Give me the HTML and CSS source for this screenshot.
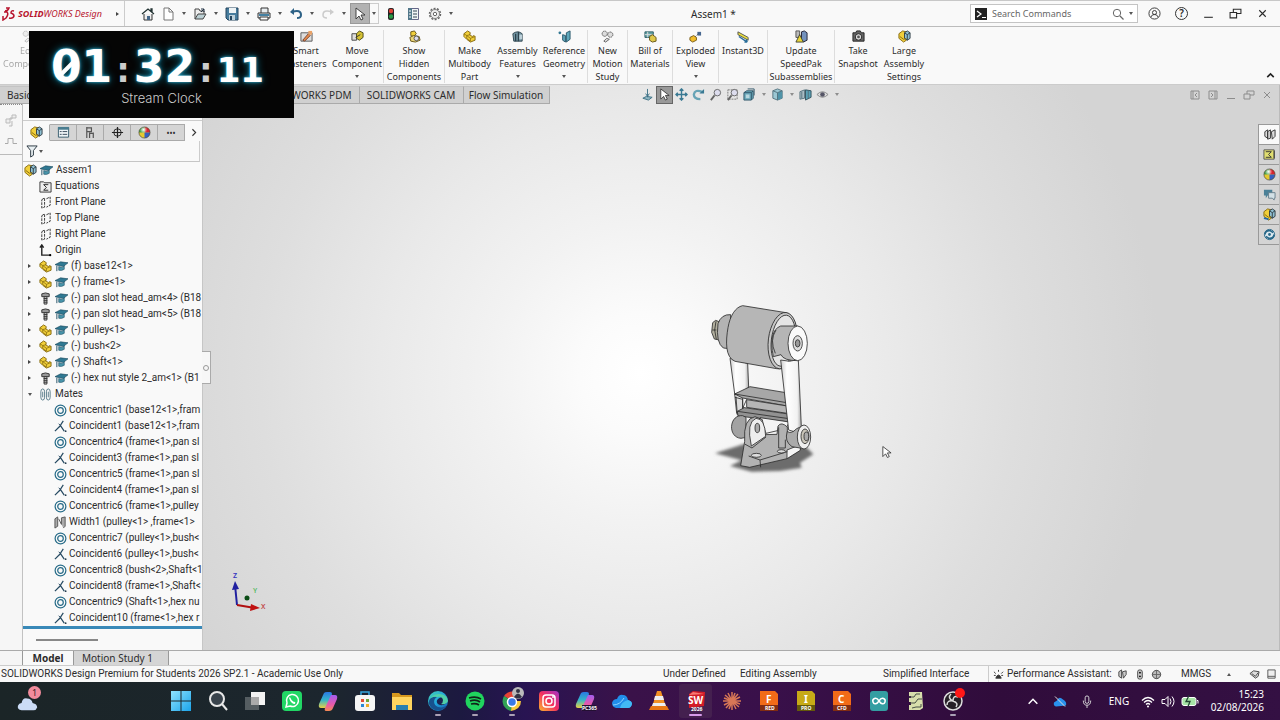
FILE: index.html
```html
<!DOCTYPE html>
<html lang="en">
<head>
<meta charset="utf-8">
<title>Assem1 - SOLIDWORKS Design</title>
<link rel="stylesheet" href="styles.css">
</head>
<body>
<svg class="defs" aria-hidden="true">
  <defs>
    <radialGradient id="ball"><stop offset="0" stop-color="#fff"/><stop offset="1" stop-color="#fff" stop-opacity="0"/></radialGradient>
    <linearGradient id="leg"><stop offset="0" stop-color="#ccc"/><stop offset=".3" stop-color="#fff"/><stop offset=".8" stop-color="#f2f2f2"/><stop offset="1" stop-color="#aaa"/></linearGradient>
    <linearGradient id="insta" x1="0" y1="1" x2="1" y2="0"><stop offset="0" stop-color="#fdb62c"/><stop offset=".5" stop-color="#f2305f"/><stop offset="1" stop-color="#a432c8"/></linearGradient>
    <linearGradient id="edge" x1="0" y1="0" x2="1" y2="1"><stop offset="0" stop-color="#45d3b0"/><stop offset=".5" stop-color="#22a6de"/><stop offset="1" stop-color="#1354a8"/></linearGradient>
    <linearGradient id="win" x1="0" y1="0" x2="1" y2="1"><stop offset="0" stop-color="#8fe3ff"/><stop offset="1" stop-color="#1ba4ea"/></linearGradient>
    <linearGradient id="cop-a" x1="0" y1="0" x2="0" y2="1"><stop offset="0" stop-color="#2a78e4"/><stop offset=".5" stop-color="#35b5c9"/><stop offset="1" stop-color="#e8cf45"/></linearGradient>
    <linearGradient id="cop-b" x1="0" y1="0" x2="0" y2="1"><stop offset="0" stop-color="#a35df0"/><stop offset=".6" stop-color="#e85aa8"/><stop offset="1" stop-color="#f58a52"/></linearGradient>
    <filter id="blur"><feGaussianBlur stdDeviation="5"/></filter>
    <symbol id="part" viewBox="0 0 14 14"><path d="M1 4 5 1l3 2-1 2 3 2 2-1 1 1v4l-5 2-4-3-3-3z" fill="#f1cf3a" stroke="#86690e"/><path d="M1 4l3 2 4-1M4 6v3l4 3V9l5-2M8 9 4 6" fill="none" stroke="#86690e" stroke-width=".8"/></symbol>
    <symbol id="assembly" viewBox="0 0 14 14"><path d="M1 4 5 1l4 1v9l-3 2-5-4z" fill="#f1cf3a" stroke="#86690e"/><path d="m7 3 3-2 3 2v6l-3 2-3-2z" fill="#8fc0d2" stroke="#303c44"/><path d="m7 3 3 2 3-2M10 5v6" fill="none" stroke="#303c44"/><path d="m2 7 4 3 3-1" fill="none" stroke="#86690e"/></symbol>
    <symbol id="hat" viewBox="0 0 14 12"><path d="M0 4 6 1l8 1-5 4z" fill="#2f7892" stroke="#1d4b60" stroke-width=".7"/><path d="M4 6v4q3 1 6-1V5L8 7z" fill="#4794aa" stroke="#1d4b60" stroke-width=".6"/><path d="M2 5v6" stroke="#1d4b60"/></symbol>
    <symbol id="screw" viewBox="0 0 12 14"><path d="M2 2q4-2 8 0v3H2z" fill="#999" stroke="#333"/><path d="M4.500 5h3v8h-3z" fill="#ccc" stroke="#333"/><path d="M4 7h4M4 9h4M4 11h4" stroke="#333"/></symbol>
    <symbol id="plane" viewBox="0 0 12 14"><path d="M2 4 5 2v10l-3 1zM7 3l4-2v9l-4 2" fill="none" stroke="#333" stroke-dasharray="3 1"/></symbol>
    <symbol id="mates" viewBox="0 0 12 14"><path d="M5 4v6q0 3-2 3t-2-3V4q0-3 2-3t2 3M3 4v6M11 4v6q0 3-2 3t-2-3V4q0-3 2-3t2 3M9 4v6" fill="none" stroke="#547987"/></symbol>
    <symbol id="concentric" viewBox="0 0 14 14"><circle cx="7" cy="7" r="5.800" fill="none" stroke="#266b88" stroke-width="1.300"/><circle cx="7" cy="7" r="3" fill="none" stroke="#266b88" stroke-width="1.300"/></symbol>
    <symbol id="coincident" viewBox="0 0 14 14"><path d="M1 12 6 7l4-6M7 6l4 6" fill="none" stroke="#264a62" stroke-width="1.300"/><path d="m5 4 2 2" stroke="#264a62"/><circle cx="12.500" cy="12" r="1" fill="#263e50"/></symbol>
    <symbol id="gears" viewBox="0 0 14 14"><circle cx="4" cy="4" r="2.800" fill="#ddd" stroke="#555" stroke-dasharray="1.500 .6"/><circle cx="10" cy="5" r="2.800" fill="#ddd" stroke="#555" stroke-dasharray="1.500 .6"/><path d="m3 12 3-3 3 1-4 3z" fill="#ddd" stroke="#666"/></symbol>
    <symbol id="beachball" viewBox="0 0 14 14"><circle cx="7" cy="7" r="6" fill="#e6c92e"/><path d="M7 7V1a6 6 0 0 1 6 6z" fill="#d8232f"/><path d="M7 7h6a6 6 0 0 1-6 6z" fill="#355fc0"/><path d="M7 7H1a6 6 0 0 1 6-6z" fill="#44a04b"/><circle cx="6" cy="4" r="4" fill="url(#ball)"/><circle cx="7" cy="7" r="6" fill="none" stroke="#444" stroke-width=".7"/></symbol>
    <symbol id="restore" viewBox="0 0 12 12"><path d="M1 5h6v5H1zM4 5V2h7v4H7" fill="none" stroke="currentColor"/></symbol>
    <symbol id="close" viewBox="0 0 12 12"><path d="m3 3 6 6M9 3 3 9" stroke="currentColor"/></symbol>
    <symbol id="minimise" viewBox="0 0 12 12"><path d="M2 9.500h8" stroke="currentColor"/></symbol>
    <symbol id="arrow" viewBox="0 0 12 14"><path d="M2 1v11l3-3 2 4 2-1-2-4h4z" fill="#fff" stroke="#333" stroke-width=".9"/></symbol>
    <symbol id="copilot" viewBox="0 0 20 20"><path d="M6 2q1-1 3-1h3q2 0 2 2L10 15q-1 2-3 2H3q-3 0-2-4z" fill="url(#cop-a)"/><path d="M13 4h4q3 0 2 4l-4 9q-1 3-4 3H8q-2 0-1-3z" fill="url(#cop-b)"/></symbol>
  </defs>
</svg>

<header class="titlebar">
  <div class="brand">
    <svg viewBox="0 0 14 14" width="14" height="14"><path d="M4 1h3q-1 3-4 3m-1 1h3q2 2-1 6L1 13V9m11-5q-3-1-3 2 3 1 3 3-1 3-5 2" fill="none" stroke="#b8152e" stroke-width="1.500"/></svg>
    <span><b>SOLID</b>WORKS <i>Design</i></span>
  </div>
  <button class="brand-more" aria-label="Show menu"><i class="tri-right"></i></button>
  <nav class="quick">
    <button aria-label="Home"><svg viewBox="0 0 14 14"><path d="M3 7v6h8V7" fill="#eee" stroke="#333"/><path d="m1 7 6-5 6 5M10 4V2h1v3" fill="none" stroke="#233" stroke-width="1.300"/><path d="M6 9h3v4H6z" fill="#468"/></svg></button>
    <button aria-label="New"><svg viewBox="0 0 14 14"><path d="M3 1h5l4 4v8H3z" fill="#fff" stroke="#777"/><path d="M8 1v4h4" fill="none" stroke="#777"/></svg></button><button class="drop" aria-label="New options"></button>
    <button aria-label="Open"><svg viewBox="0 0 14 14"><path d="M2 12V2h4l1 2h4v3" fill="#eee" stroke="#444"/><path d="m2 12 3-5h8l-3 5z" fill="#bdd1d5" stroke="#444"/><path d="m8 5 3-3M8 2h3v3" fill="none" stroke="#234"/></svg></button><button class="drop" aria-label="Open options"></button>
    <button aria-label="Save"><svg viewBox="0 0 14 14"><path d="M1 1h12v12H3l-2-2z" fill="#477c9d" stroke="#24445e"/><path d="M4 1h7v5H4z" fill="#eef3f5"/><path d="M4 8h6v5H4z" fill="#bdd0da"/><path d="M5 9h2v4H5z" fill="#24445e"/></svg></button><button class="drop" aria-label="Save options"></button>
    <button aria-label="Print"><svg viewBox="0 0 14 14"><path d="M4 6V1h7v5M1 6h12v5H1z" fill="#e8edf0" stroke="#333"/><path d="M2 7h10v2H2z" fill="#4481a3"/><path d="M3 10h8v3H3z" fill="#fff" stroke="#333"/></svg></button><button class="drop" aria-label="Print options"></button>
    <button aria-label="Undo"><svg viewBox="0 0 14 14"><path d="M3 5q9-3 9 3 0 3-4 3" fill="none" stroke="#2d6186" stroke-width="2"/><path d="m1 5 4-4v7z" fill="#2d6186"/></svg></button><button class="drop" aria-label="Undo options"></button>
    <button aria-label="Redo"><svg viewBox="0 0 14 14"><path d="M11 5Q2 2 2 8q0 3 4 3" fill="none" stroke="#ccc" stroke-width="1.500"/><path d="m13 5-4-3v6z" fill="#ccc"/></svg></button><button class="drop" aria-label="Redo options"></button>
    <button class="pressed" aria-label="Select"><svg viewBox="0 0 12 14"><use href="#arrow"/></svg></button><button class="drop boxed" aria-label="Select options"></button>
    <button class="status-light" aria-label="Rebuild"><svg viewBox="0 0 14 14"><rect x="4" y="1" width="6" height="12" rx="2" fill="#222"/><circle cx="7" cy="4" r="2.200" fill="#e04238"/><circle cx="7" cy="9.500" r="2.200" fill="#289845"/></svg></button>
    <button aria-label="File properties"><svg viewBox="0 0 14 14"><path d="M2.500 1.500h10v11h-10z" fill="#eef3f5" stroke="#668"/><path d="M2 1h4v12H2z" fill="#51778a"/><path d="M3 4h2M3 7h2M3 10h2" stroke="#fff"/><path d="M7 4h4M7 7h4M7 10h4" stroke="#345"/></svg></button>
    <button aria-label="Options"><svg viewBox="0 0 14 14"><circle cx="7" cy="7" r="5.500" fill="none" stroke="#666" stroke-dasharray="2 1.400" stroke-width="1.500"/><circle cx="7" cy="7" r="4.500" fill="#eee" stroke="#666" stroke-width=".8"/><circle cx="7" cy="7" r="1.700" fill="#fff" stroke="#666"/></svg></button><button class="drop" aria-label="More options"></button>
  </nav>
  <h1>Assem1 *</h1>
  <label class="search">
    <svg viewBox="0 0 12 12" width="12" height="12"><path d="M0 0h12v12H0z" fill="#222"/><path d="m2 3 4 3-4 3M7 9.500h4" fill="none" stroke="#fff" stroke-width="1.200"/></svg>
    <input type="text" placeholder="Search Commands" aria-label="Search Commands">
    <svg viewBox="0 0 12 12" width="12" height="12"><circle cx="5" cy="5" r="3.700" fill="none" stroke="#666"/><path d="m8 8 3.500 3.500" stroke="#666" stroke-width="1.200"/></svg>
    <i class="tri-down"></i>
  </label>
  <div class="window-tools">
    <button aria-label="Account"><svg viewBox="0 0 14 14"><circle cx="7" cy="7" r="6" fill="none" stroke="#333"/><circle cx="7" cy="6" r="2.200" fill="none" stroke="#333"/><path d="M3 11q1-3 4-3t4 3" fill="none" stroke="#333"/></svg></button>
    <button class="help" aria-label="Help">?</button>
    <button aria-label="Minimise"><svg viewBox="0 0 12 12"><use href="#minimise"/></svg></button>
    <button aria-label="Restore"><svg viewBox="0 0 12 12"><use href="#restore"/></svg></button>
    <button aria-label="Close"><svg viewBox="0 0 12 12"><use href="#close"/></svg></button>
  </div>
</header>

<section class="ribbon" aria-label="Assembly commands">
  <button class="faded"><svg viewBox="0 0 14 14"><use href="#gears"/></svg>Edit<br>Component</button>
  <button><svg viewBox="0 0 14 14"><path d="M1 3h12v9H1z" fill="#ddd" stroke="#555"/><path d="m3 11 6-7 2 2-6 6z" fill="#e68a4b" stroke="#743"/><path d="M9 1h4v4H9z" fill="#e9a267"/></svg>Smart<br>Fasteners</button>
  <button class="end"><svg viewBox="0 0 14 14"><path d="M1 4h5v7H1z" fill="#ddd" stroke="#444"/><path d="m6 4 3-3 4 2v5l-4 3-3-2z" fill="#d6c234" stroke="#4b481a"/><path d="m5 8 5-3" stroke="#333"/></svg>Move<br>Component<i class="tri-down"></i></button>
  <button class="end"><svg viewBox="0 0 14 14"><path d="m3 2 4-1 2 3-3 3-3-1z" fill="#f1cf3a" stroke="#665416"/><path d="m2 8 4-2 6 1 1 4-5 2-5-1z" fill="#ead478" stroke="#665416"/><circle cx="9" cy="9" r="2.500" fill="#dde" stroke="#555"/></svg>Show<br>Hidden<br>Components</button>
  <button><svg viewBox="0 0 14 14"><use href="#part"/></svg>Make<br>Multibody<br>Part</button>
  <button><svg viewBox="0 0 14 14"><path d="M2 4q5-4 10 0v8H3z" fill="#789caa" stroke="#2d424c"/><path d="M5 4v8M8 2v10" stroke="#2d424c" stroke-width="1.500"/><path d="M9 5h3v5H9z" fill="#bdd0d9"/></svg>Assembly<br>Features<i class="tri-down"></i></button>
  <button class="end"><svg viewBox="0 0 14 14"><circle cx="2" cy="3" r="1.500" fill="#327893"/><path d="M5 5l3 1v7l-3-2zM9 3l4-2v9l-4 3z" fill="#5fa9bd" stroke="#28566a"/></svg>Reference<br>Geometry<i class="tri-down"></i></button>
  <button class="end"><svg viewBox="0 0 14 14"><use href="#gears"/></svg>New<br>Motion<br>Study</button>
  <button class="end"><svg viewBox="0 0 14 14"><path d="M1 2h9v6H1z" fill="#66a5a8" stroke="#2b5b64"/><path d="M1 5h9M4 2v6" stroke="#ddd"/><path d="m6 7 3-2 4 3v4l-4 1-3-2z" fill="#dfc84b" stroke="#665416"/></svg>Bill of<br>Materials</button>
  <button class="end"><svg viewBox="0 0 14 14"><path d="m1 8 4-2 3 2v3l-4 2-3-2z" fill="#f1bd2d" stroke="#765a14"/><path d="M9 2h4v4H9z" fill="#476790"/><path d="m7 7 3-3" stroke="#333" stroke-dasharray="1 1"/></svg>Exploded<br>View<i class="tri-down"></i></button>
  <button class="end"><svg viewBox="0 0 14 14"><path d="m1 2 11 6v3L1 5z" fill="#e9df3e" stroke="#555"/><path d="m2 7 9 6m0 0-1-3m1 3H8" fill="none" stroke="#286d9a" stroke-width="1.500"/></svg>Instant3D</button>
  <button class="end"><svg viewBox="0 0 14 14"><path d="m7 2 3-1 3 2v8l-4 2-2-2z" fill="#7492bd" stroke="#223"/><path d="M1 1h4v7H1z" fill="#bbb" stroke="#555"/><path d="m5 5 4 8H1z" fill="#ead738" stroke="#443"/></svg>Update<br>SpeedPak<br>Subassemblies</button>
  <button><svg viewBox="0 0 14 14"><path d="M1 3h3l1-2h4l1 2h3v9H1z" fill="#666" stroke="#222"/><circle cx="7" cy="7.500" r="3.500" fill="#ddd" stroke="#222"/><circle cx="7" cy="7.500" r="1.500" fill="#555"/></svg>Take<br>Snapshot</button>
  <button><svg viewBox="0 0 14 14"><use href="#assembly"/></svg>Large<br>Assembly<br>Settings</button>
  <button class="collapse" aria-label="Collapse ribbon"><svg viewBox="0 0 12 12"><path d="m3 7.500 3-3 3 3" fill="none" stroke="#222" stroke-width="1.500"/></svg></button>
</section>

<main class="workspace">
  <div class="command-row">
    <nav class="command-tabs"><button>Basic</button><button>SOLIDWORKS PDM</button><button>SOLIDWORKS CAM</button><button>Flow Simulation</button></nav>
    <div class="hud">
      <button aria-label="Normal to"><svg viewBox="0 0 14 14"><path d="M7 1v9M2 11l4-2 6 1-4 3z" fill="#91b7c2" stroke="#3d7085"/><path d="m5 6 2 3 2-3" fill="none" stroke="#3d7085"/></svg></button>
      <button class="pressed" aria-label="Select"><svg viewBox="0 0 12 14"><use href="#arrow"/></svg></button>
      <button aria-label="Pan"><svg viewBox="0 0 14 14"><path d="M7 1v12M1 7h12M5 3l2-2 2 2M5 11l2 2 2-2M3 5 1 7l2 2M11 5l2 2-2 2" fill="none" stroke="#397993" stroke-width="1.500"/></svg></button>
      <button aria-label="Rotate"><svg viewBox="0 0 14 14"><path d="M9 12q-7 0-7-5 1-6 9-3" fill="none" stroke="#68a4b6" stroke-width="2.500"/><path d="M8 6h5V1z" fill="#397993"/></svg></button>
      <button aria-label="Zoom to fit"><svg viewBox="0 0 14 14"><circle cx="9" cy="5" r="3.500" fill="#dde" stroke="#666"/><path d="m6 8-4 5" stroke="#666" stroke-width="2"/></svg></button>
      <button aria-label="Zoom to area"><svg viewBox="0 0 14 14"><path d="M2 2h10v10H2z" fill="none" stroke="#777" stroke-dasharray="2 1"/><circle cx="9" cy="5" r="3.500" fill="#dde" stroke="#666"/><path d="m6 8-4 5" stroke="#666" stroke-width="2"/></svg></button>
      <button aria-label="View orientation"><svg viewBox="0 0 14 14"><path d="m1 5 3-2h7v8l-2 2H1z" fill="#69a8ba" stroke="#31586a"/><path d="M1 5h8v8M9 5l2-2M5 1h7v7" fill="none" stroke="#31586a"/><path d="M3 7h4v4H3z" fill="#b8d7df"/></svg></button><button class="drop" aria-label="Orientation options"></button>
      <button aria-label="Display style"><svg viewBox="0 0 14 14"><path d="m2 3 5-2 5 2v8l-5 2-5-2z" fill="#9cc8d4" stroke="#53727e"/><path d="m7 5 5-2v8l-5 2z" fill="#4f93a8"/><path d="m2 3 5 2 5-2M7 5v8" fill="none" stroke="#53727e"/></svg></button><button class="drop" aria-label="Style options"></button>
      <button aria-label="Section view"><svg viewBox="0 0 14 14"><path d="m1 4 5-2v9l-5 1z" fill="#aabcc4" stroke="#55727e"/><path d="m7 2 6 1v7l-6 3z" fill="#5aa2b6" stroke="#35525e"/><path d="M3 4v7M10 3v8" stroke="#55727e"/></svg></button>
      <button aria-label="Hide or show"><svg viewBox="0 0 14 14"><path d="M1 7q6-6 12 0-6 6-12 0z" fill="#ddd" stroke="#888"/><circle cx="7" cy="7" r="2.500" fill="#556"/></svg></button><button class="drop" aria-label="Visibility options"></button>
    </div>
    <div class="document-tools">
      <button aria-label="Dock left"><svg viewBox="0 0 12 12"><path d="M2 2h8v8H2zM4 2v8M8 4 6 6l2 2" fill="none" stroke="currentColor"/></svg></button>
      <button aria-label="Dock right"><svg viewBox="0 0 12 12"><path d="M2 2h8v8H2zM8 2v8M4 4l2 2-2 2" fill="none" stroke="currentColor"/></svg></button>
      <button aria-label="Minimise document"><svg viewBox="0 0 12 12"><use href="#minimise"/></svg></button>
      <button aria-label="Restore document"><svg viewBox="0 0 12 12"><use href="#restore"/></svg></button>
      <button aria-label="Close document"><svg viewBox="0 0 12 12"><use href="#close"/></svg></button>
    </div>
  </div>

  <div class="work-row">
    <aside class="rail">
      <svg viewBox="0 0 14 14" width="14" height="14"><path d="M2 10h4V5h6V2H8v4H2zM5 13h3V8" fill="#eee" stroke="#bbb"/></svg>
      <svg viewBox="0 0 14 14" width="14" height="14"><path d="M1 10h3V5h5v5h4" fill="none" stroke="#aaa"/></svg>
    </aside>
    <aside class="feature-panel">
      <nav class="panel-tabs">
        <button class="active" aria-label="Feature tree"><svg viewBox="0 0 14 14"><use href="#assembly"/></svg></button>
        <button aria-label="Properties"><svg viewBox="0 0 14 14"><path d="M1.500 2h11v10h-11z" fill="#eef4f7" stroke="#355a6c"/><path d="M1 1h12v3H1z" fill="#4a7d90"/><path d="M3 6h2M3 9h2M6 6h5M6 9h5" stroke="#345"/></svg></button>
        <button aria-label="Configurations"><svg viewBox="0 0 14 14"><path d="M3 1v12M3 2h5v4H3M6 7v6M6 8h4v4M10 7v6" fill="none" stroke="#555" stroke-width="1.300"/></svg></button>
        <button aria-label="Dimensions"><svg viewBox="0 0 14 14"><circle cx="7" cy="7" r="4" fill="none" stroke="#222"/><path d="M7 1v12M1 7h12" stroke="#222" stroke-width="1.300"/></svg></button>
        <button aria-label="Appearances"><svg viewBox="0 0 14 14"><use href="#beachball"/></svg></button>
        <button class="dots" aria-label="More">•••</button>
        <button class="next" aria-label="Next tabs"><svg viewBox="0 0 12 12"><path d="m5 3 3 3-3 3" fill="none" stroke="#333"/></svg></button>
      </nav>
      <div class="filter"><button aria-label="Filter"><svg viewBox="0 0 14 14"><path d="M1 1h11L8 6v5l-3 2V6z" fill="#e8eff2" stroke="#26333c"/></svg><i class="tri-down"></i></button></div>
      <ul class="tree">
        <li class="root"><svg><use href="#assembly"/></svg><svg><use href="#hat"/></svg>Assem1</li>
        <li><svg viewBox="0 0 14 14"><path d="M1 2h4l1 1h7v10H1z" fill="#eee" stroke="#333"/><path d="M10 5H5l3 3-3 3h5" fill="none" stroke="#222"/></svg>Equations</li>
        <li><svg><use href="#plane"/></svg>Front Plane</li>
        <li><svg><use href="#plane"/></svg>Top Plane</li>
        <li><svg><use href="#plane"/></svg>Right Plane</li>
        <li><svg viewBox="0 0 14 14"><path d="M3 1v11h10M1 4l2-3 2 3" fill="none" stroke="#222" stroke-width="1.500"/><circle cx="12" cy="12" r="1.200"/></svg>Origin</li>
        <li><i class="tri-right"></i><svg><use href="#part"/></svg><svg><use href="#hat"/></svg>(f) base12&lt;1&gt;</li>
        <li><i class="tri-right"></i><svg><use href="#part"/></svg><svg><use href="#hat"/></svg>(-) frame&lt;1&gt;</li>
        <li><i class="tri-right"></i><svg><use href="#screw"/></svg><svg><use href="#hat"/></svg>(-) pan slot head_am&lt;4&gt; (B18</li>
        <li><i class="tri-right"></i><svg><use href="#screw"/></svg><svg><use href="#hat"/></svg>(-) pan slot head_am&lt;5&gt; (B18</li>
        <li><i class="tri-right"></i><svg><use href="#part"/></svg><svg><use href="#hat"/></svg>(-) pulley&lt;1&gt;</li>
        <li><i class="tri-right"></i><svg><use href="#part"/></svg><svg><use href="#hat"/></svg>(-) bush&lt;2&gt;</li>
        <li><i class="tri-right"></i><svg><use href="#part"/></svg><svg><use href="#hat"/></svg>(-) Shaft&lt;1&gt;</li>
        <li><i class="tri-right"></i><svg><use href="#screw"/></svg><svg><use href="#hat"/></svg>(-) hex nut style 2_am&lt;1&gt; (B1</li>
        <li><i class="tri-down"></i><svg><use href="#mates"/></svg>Mates</li>
        <li class="mate"><svg><use href="#concentric"/></svg>Concentric1 (base12&lt;1&gt;,fram</li>
        <li class="mate"><svg><use href="#coincident"/></svg>Coincident1 (base12&lt;1&gt;,fram</li>
        <li class="mate"><svg><use href="#concentric"/></svg>Concentric4 (frame&lt;1&gt;,pan sl</li>
        <li class="mate"><svg><use href="#coincident"/></svg>Coincident3 (frame&lt;1&gt;,pan sl</li>
        <li class="mate"><svg><use href="#concentric"/></svg>Concentric5 (frame&lt;1&gt;,pan sl</li>
        <li class="mate"><svg><use href="#coincident"/></svg>Coincident4 (frame&lt;1&gt;,pan sl</li>
        <li class="mate"><svg><use href="#concentric"/></svg>Concentric6 (frame&lt;1&gt;,pulley</li>
        <li class="mate"><svg viewBox="0 0 14 14"><path d="m1 3 3-2v10l-3 2zM5 3l3 6V2l4-1v10l-2 2" fill="#aaa" stroke="#555"/></svg>Width1 (pulley&lt;1&gt; ,frame&lt;1&gt;</li>
        <li class="mate"><svg><use href="#concentric"/></svg>Concentric7 (pulley&lt;1&gt;,bush&lt;</li>
        <li class="mate"><svg><use href="#coincident"/></svg>Coincident6 (pulley&lt;1&gt;,bush&lt;</li>
        <li class="mate"><svg><use href="#concentric"/></svg>Concentric8 (bush&lt;2&gt;,Shaft&lt;1</li>
        <li class="mate"><svg><use href="#coincident"/></svg>Coincident8 (frame&lt;1&gt;,Shaft&lt;</li>
        <li class="mate"><svg><use href="#concentric"/></svg>Concentric9 (Shaft&lt;1&gt;,hex nu</li>
        <li class="mate"><svg><use href="#coincident"/></svg>Coincident10 (frame&lt;1&gt;,hex r</li>
      </ul>
      <div class="scrollbar"><i></i></div>
      <button class="splitter" aria-label="Collapse panel"></button>
    </aside>
    <section class="canvas" aria-label="Graphics area">
      <svg class="model" viewBox="0 0 660 600">
        <path filter="url(#blur)" d="m75 490 85-27h180l30 30-40 25 5 15-65 10-85 2-65-17 35-17z" fill="#6c6c6c"/>
        <g stroke="#2c2c2c" stroke-width="2.500" stroke-linejoin="round">
          <path d="m120 205 53 15 3 72-18 16-24 3z" fill="url(#leg)"/>
          <path d="M134 312l24 5v45l-18 8z" fill="#ddd"/>
          <path d="M68 98l9-7 13 5-2 54-15-3-8-20z" fill="#b2b09f"/><path d="M78 94 74 120l5 28M67 120h12" fill="none"/>
          <path d="M84 101q10-29 38-27l-2 102-20-2Q77 158 84 101z" fill="#b3b3b3"/>
          <path d="M158 47l130 21c38 12 36 80 20 125-12 35-28 46-48 43l-125-22c-30-12-28-61-21-101 6-35 22-62 44-66z" fill="#b6b6b6"/>
          <ellipse cx="278" cy="152" rx="43" ry="85" transform="rotate(7 278 152)" fill="#c8c8c8"/>
          <ellipse cx="280" cy="152" rx="36" ry="77" transform="rotate(7 280 152)" fill="#e5e5e5"/>
          <path d="M134 312l46-22 108 18 4 40-134-24z" fill="#a7a7a7"/><path d="M134 312l156 26M135 322l23 6M138 320l4 55M158 328v25l8 2M158 355l12-27" fill="none"/>
          <path d="M170 329l122 19v22l-122-18z" fill="#b5b5b5"/>
          <path d="M142 364l21-11 132 19 3 24-154-18z" fill="#929292"/><path d="M142 364l155 22" fill="none"/>
          <path d="M210 383l88 13-10 20-60 14z" fill="#f4f4f4"/>
          <path d="M158 377c-41-4-46 65-5 68l15-3V382z" fill="#a2a2a2"/>
          <path d="M164 454q-5-68 31-74l22 9 8 45 36-1 3-25q10-14 28 3v30l40 21-2 18-39 26-112 26-27-5z" fill="#b2b2b2"/>
          <path d="M291 480l40-16v17l-40 25z" fill="#f5f5f5"/>
          <path d="M184 468q-16-72 14-83 27 0 29 54z" fill="#eee"/><path d="M164 462l22 12 42-33M176 498l34 12 82-25M210 510l2 22" fill="none"/>
          <ellipse cx="202" cy="414" rx="7" ry="14" fill="#aaa"/><ellipse cx="199" cy="496" rx="15" ry="6" fill="#ddd"/><ellipse cx="274" cy="484" rx="12" ry="5" fill="#ddd"/>
          <path d="M266 412v62h20v-25" fill="none"/>
          <path d="M272 210q25 8 53-1l9 202-18 15-20-6z" fill="url(#leg)"/>
          <path d="M292 424q10 10 28-8l22-10v70l-36-6q-24-16-14-46z" fill="#aaa"/>
          <ellipse cx="342" cy="441" rx="20" ry="36" fill="#eee"/><ellipse cx="345" cy="439" rx="12" ry="22" fill="#c9c5b9"/><ellipse cx="349" cy="439" rx="7" ry="13" fill="#aaa"/>
          <path d="M272 108q-38 15-22 92l23-6q7 18 50 18V108z" fill="#b5b5b5"/><path d="M258 120q-20 30-2 70" fill="none"/>
          <ellipse cx="323" cy="160" rx="29" ry="52" fill="#fafafa"/><ellipse cx="323" cy="160" rx="14" ry="23" fill="#ddd"/><ellipse cx="323" cy="160" rx="7" ry="11" fill="#999"/>
        </g>
      </svg>
      <svg class="pointer" viewBox="0 0 12 14"><use href="#arrow"/></svg>
      <svg class="triad" viewBox="0 0 40 42"><path d="M6 34 4 14" stroke="#2020a0" stroke-width="2"/><path d="m1 19 3-9 4 8z" fill="#2020a0"/><path d="m6 34 18 3" stroke="#b01010" stroke-width="2"/><path d="m20 33 9 4-10 3z" fill="#c01010"/><circle cx="16" cy="27" r="2.500" fill="#0b4d16"/><text x="2" y="7" fill="#3434c0">Z</text><text x="22" y="22" fill="#5bbb68">Y</text><text x="30" y="38" fill="#c34a4a">X</text></svg>
      <nav class="task-pane">
        <button class="active" aria-label="Resources"><svg viewBox="0 0 14 14"><path d="m2 4 3-2v9l-3-2zM5 4l3-2v9l-3 1zM9 4l4-2v7l-3 3z" fill="#ddd" stroke="#333"/></svg></button>
        <button aria-label="Design library"><svg viewBox="0 0 14 14"><path d="M1 2h11v10H1z" fill="#e0de70" stroke="#555"/><path d="M3 4h6L6 7l3 3H3M12 3v8" fill="none" stroke="#333"/></svg></button>
        <button aria-label="Appearances"><svg viewBox="0 0 14 14"><use href="#beachball"/></svg></button>
        <button aria-label="Forum"><svg viewBox="0 0 14 14"><path d="M1 2h9v6H5l-2 3V8H1z" fill="#4b8097"/><path d="M6 5h7v6h-1v2l-2-2H6z" fill="#d2e0e6" stroke="#68808c"/></svg></button>
        <button aria-label="Components"><svg viewBox="0 0 14 14"><use href="#assembly"/><path d="m1 11 5 1" stroke="#2268a8" stroke-width="2"/></svg></button>
        <button aria-label="Connected services"><svg viewBox="0 0 14 14"><circle cx="7" cy="7" r="5.500" fill="#dce8ee" stroke="#286889"/><path d="M2 7q1-5 6-4l3 2M12 7q-1 5-6 4l-3-2" fill="none" stroke="#286889" stroke-width="1.800"/><circle cx="7" cy="7" r="1.500" fill="#286889"/></svg></button>
      </nav>
    </section>
  </div>
</main>

<nav class="study-tabs"><button class="active">Model</button><button>Motion Study 1</button></nav>

<section class="statusbar">
  <span class="edition">SOLIDWORKS Design Premium for Students 2026 SP2.1 - Academic Use Only</span>
  <span>Under Defined</span><span>Editing Assembly</span><span>Simplified Interface</span>
  <span class="performance"><svg viewBox="0 0 12 12"><path d="M3 10q3-7 6 0zM6 1v2M1 3l2 2M11 3 9 5M1 7h2M9 7h2" fill="#333" stroke="#333"/></svg>Performance Assistant:</span>
  <span class="indicators"><svg viewBox="0 0 12 12"><path d="M2 3l3-2v9L2 8zM6 3l4-1v4l-3 4z" fill="#ccc" stroke="#444"/></svg><svg viewBox="0 0 12 12"><rect x="4" y="1" width="5" height="10" rx="2" fill="#ccc" stroke="#444"/><circle cx="6.500" cy="4" r="1"/><circle cx="6.500" cy="8" r="1"/></svg><svg viewBox="0 0 12 12"><circle cx="6" cy="6" r="4.500" fill="#bbb" stroke="#444"/><path d="M1 6h10M6 1v10" stroke="#666"/></svg></span>
  <span>MMGS</span><i class="tri-up"></i>
  <span class="indicators"><svg viewBox="0 0 12 12"><path d="m1 5 4-3 6 1-1 5-3 2z" fill="#ddd" stroke="#444"/><path d="m3 5 4 3 3-4" fill="none" stroke="#444"/></svg><svg viewBox="0 0 12 12"><path d="M2 1h8v9H2zM2 8h8" fill="#eee" stroke="#555"/></svg></span>
</section>

<footer class="taskbar">
  <button class="weather" aria-label="Weather, 1 alert"><svg viewBox="0 0 24 18"><path d="M5 17q-5-1-4-5 1-3 4-3 1-6 6-5 5 0 6 5 5 1 5 5-1 3-4 3z" fill="#cbdcf6"/></svg><b>1</b></button>
  <div class="apps">
    <button aria-label="Start"><svg viewBox="0 0 20 20"><path d="M0 0h9.500v9.500H0zM10.500 0H20v9.500h-9.500zM0 10.500h9.500V20H0zM10.500 10.500H20V20h-9.500z" fill="url(#win)"/></svg></button>
    <button aria-label="Search"><svg viewBox="0 0 20 20"><circle cx="9" cy="8" r="7" fill="#39434c" stroke="#e8e8e8" stroke-width="2"/><path d="m14 13 5 6" stroke="#e8e8e8" stroke-width="2"/></svg></button>
    <button aria-label="Task view"><svg viewBox="0 0 20 20"><path d="M6 1h14v13H6z" fill="#f3f3f3"/><path d="M0 6h14v13H0z" fill="#555d61"/><path d="M6 6h8v8H6z" fill="#aaa"/></svg></button>
    <button aria-label="WhatsApp"><svg viewBox="0 0 20 20"><rect width="20" height="20" rx="4" fill="#21d765"/><path d="m4 16 1-4a6 6 0 1 1 3 3z" fill="none" stroke="#fff" stroke-width="1.500"/><path d="M7 7q1-2 2 1 0 1 3 3 2-1 1 2-4 0-6-6" fill="#fff"/></svg></button>
    <button aria-label="Copilot"><svg viewBox="0 0 20 20"><use href="#copilot"/></svg></button>
    <button aria-label="Store"><svg viewBox="0 0 20 20"><path d="M6 5V1h8v4" fill="none" stroke="#35a6df" stroke-width="1.500"/><rect y="4" width="20" height="16" rx="3" fill="#f5f5f5"/><path d="M6 8h3v3H6z" fill="#e34e37"/><path d="M11 8h3v3h-3z" fill="#6da83d"/><path d="M6 13h3v3H6z" fill="#2989d8"/><path d="M11 13h3v3h-3z" fill="#eeae27"/></svg></button>
    <button aria-label="File Explorer"><svg viewBox="0 0 20 20"><path d="M0 2h7l2 2h11v15H0z" fill="#d7981e"/><path d="M0 6h20v13H0z" fill="#ffd45f"/><path d="M4 19v-5h12v5" fill="#287fb0"/></svg></button>
    <button class="running" aria-label="Edge"><svg viewBox="0 0 20 20"><circle cx="10" cy="10" r="10" fill="url(#edge)"/><path d="M1 13C0 7 5 5 9 6c-4 2-4 8 1 10 4 1 7 0 9-2-5 8-15 7-18-1" fill="#17528f"/><path d="M10 8c-3 3 0 7 5 6q3-1 4-3 0-3-3-4-3-2-6 1" fill="#1c2250"/><path d="M9 6q5-1 6 3 0 3-2 4 5 1 7-3 0-6-8-7-7-1-11 6 3-4 8-3" fill="#50d0a8"/></svg></button>
    <button class="running" aria-label="Spotify"><svg viewBox="0 0 20 20"><circle cx="10" cy="10" r="9.500" fill="#20d45e"/><path d="M4 7q7-2 12 1M5 10q6-2 10 1M6 13q5-1 8 1" fill="none" stroke="#102319" stroke-width="1.700"/></svg></button>
    <button class="running" aria-label="Chrome"><svg viewBox="0 0 20 20"><path d="M10 10 2 5a9.500 9.500 0 0 1 16 0z" fill="#e74335"/><path d="M10 10 9 20A10 10 0 0 1 2 5z" fill="#31a354"/><path d="M10 10h9q0 8-10 10z" fill="#f8ca3e"/><circle cx="10" cy="11" r="4.500" fill="#3979e8" stroke="#fff" stroke-width="1.500"/><circle cx="16" cy="2" r="6" fill="#bbb"/><circle cx="16" cy="0" r="2" fill="#334"/><path d="M12 6q4-7 8 0-4 3-8 0" fill="#334"/></svg></button>
    <button aria-label="Instagram"><svg viewBox="0 0 20 20"><rect width="20" height="20" rx="4" fill="url(#insta)"/><rect x="4" y="4" width="12" height="12" rx="3" fill="none" stroke="#fff" stroke-width="1.500"/><circle cx="10" cy="10" r="3" fill="none" stroke="#fff" stroke-width="1.500"/><circle cx="14" cy="6" r="1" fill="#fff"/></svg></button>
    <button aria-label="Copilot 365"><svg viewBox="0 0 20 20"><use href="#copilot"/><path d="M7 14h14v6H7z" fill="#241033"/><text x="7" y="19" class="tiny">PC365</text></svg></button>
    <button aria-label="OneDrive"><svg viewBox="0 0 20 20"><path d="M4 17q-4-1-4-5 1-4 5-4 2-5 6-4 4 0 5 5 4 1 4 4-1 4-4 4z" fill="#218eea"/><path d="M1 14q7 0 11-7" fill="none" stroke="#8bd4ff" stroke-width="1"/><path d="M8 17q1-6 8-8 4 1 4 4-1 4-4 4z" fill="#42baf5"/></svg></button>
    <button aria-label="VLC"><svg viewBox="0 0 20 20"><path d="M8 0h4l5 16H3z" fill="#f29123"/><path d="m6 5-1 4h10l-1-4zM4 12l-1 3h14l-1-3" fill="#eee"/><path d="M2 15h16l2 4H0z" fill="#e87714"/></svg></button>
    <button class="running selected" aria-label="SOLIDWORKS"><svg viewBox="0 0 20 20"><path d="m3 3 4-3 12 1-1 14-15 2z" fill="#d31c28"/><path d="m7 1 11 2-15 1z" fill="#f77873"/><text x="2" y="13" class="badge-text">SW</text><text x="5" y="20" class="tiny">2026</text></svg></button>
    <button aria-label="Claude"><svg viewBox="0 0 20 20"><path d="M10 1v18M1 10h18M3 4l14 12M4 17 16 3M6 2l8 16M2 7l16 6M2 14l16-8M7 18l6-16" stroke="#d77756" stroke-width="1.500"/></svg></button>
    <button aria-label="Revit"><svg viewBox="0 0 20 20"><path d="M1 0h15l3 3v17H1z" fill="#f26b18"/><path d="M1 14h18v6H1z" fill="#822d12"/><text x="7" y="12" class="badge-text">F</text><text x="6" y="19" class="tiny">RED</text></svg></button>
    <button aria-label="Inventor"><svg viewBox="0 0 20 20"><path d="M1 0h15l3 3v17H1z" fill="#c7aa17"/><path d="M1 14h18v6H1z" fill="#65590a"/><text x="8" y="12" class="badge-text">I</text><text x="5" y="19" class="tiny">PRO</text></svg></button>
    <button aria-label="CFD"><svg viewBox="0 0 20 20"><path d="M1 0h15l3 3v17H1z" fill="#f26b18"/><path d="M1 14h18v6H1z" fill="#822d12"/><text x="6" y="12" class="badge-text">C</text><text x="5" y="19" class="tiny">CFD</text></svg></button>
    <button aria-label="Arduino"><svg viewBox="0 0 20 20"><rect x="1" width="18" height="20" rx="3" fill="#349ea2"/><path d="M10 10C7 5 3 8 4 11s4 2 6-1c3-5 7-2 6 1s-4 2-6-1z" fill="none" stroke="#fff" stroke-width="1.500"/></svg></button>
    <button aria-label="Circuit designer"><svg viewBox="0 0 20 20"><path d="M3 1h13l1 16-3 2H3v-5h2v-3H3V7h2V5H3z" fill="#d8dfac"/><path d="M3 6h5l2-3h4M4 12h5l3-4h4M6 17l4-1h5v-3" fill="none" stroke="#485146"/></svg></button>
    <button class="running" aria-label="OBS"><svg viewBox="0 0 20 20"><circle cx="10" cy="10" r="9" fill="#262027" stroke="#ddd" stroke-width="1.500"/><path d="M8 3q-4 4 2 7 0-6 5-4M10 10q-6-1-6 4M10 10q6 2 3 6" fill="none" stroke="#ddd" stroke-width="1.500"/><circle cx="17" cy="2" r="5" fill="#ff1717"/></svg></button>
  </div>
  <div class="tray">
    <button aria-label="Hidden icons"><svg viewBox="0 0 12 12"><path d="m2 8 4-4 4 4" fill="none" stroke="#fff" stroke-width="1.400"/></svg></button>
    <button aria-label="Cloud status"><svg viewBox="0 0 14 12"><path d="M3 11Q0 10 1 7l3-2q2-5 6-1 4 2 3 6z" fill="#2991ed"/><path d="m2 1 10 10" stroke="#ddd"/></svg></button>
    <button aria-label="Microphone"><svg viewBox="0 0 12 14"><rect x="4" y="1" width="4" height="8" rx="2" fill="none" stroke="#ddd"/><path d="M2 6q0 5 4 5t4-5M6 11v3" fill="none" stroke="#ddd"/></svg></button>
    <button class="language">ENG</button>
    <button aria-label="Wi-Fi"><svg viewBox="0 0 14 12"><path d="M1 5q6-6 12 0M3 7q4-4 8 0M5 9q2-2 4 0" fill="none" stroke="#fff" stroke-width="1.200"/><circle cx="7" cy="11" r="1" fill="#fff"/></svg></button>
    <button aria-label="Volume"><svg viewBox="0 0 14 12"><path d="M1 4h3l3-3v10L4 8H1zM9 3q2 3 0 6M11 1q4 5 0 10" fill="none" stroke="#fff"/></svg></button>
    <button class="battery" aria-label="Battery"><svg viewBox="0 0 18 12"><rect x="1" y="2" width="14" height="8" rx="2" fill="#a7e4a6" stroke="#fff"/><path d="M16 5h1v3" fill="none" stroke="#fff"/><path d="M8 0 5 6h4l-2 5" fill="none" stroke="#243" stroke-width="1.300"/></svg></button>
    <time>15:23<br>02/08/2026</time>
  </div>
</footer>

<section class="stream-clock" aria-label="Stream Clock">
  <div class="digits"><span class="slashed">01</span><em>:</em><span>32</span><em>:</em><small>11</small></div>
  <p>Stream Clock</p>
</section>
</body>
</html>
```

FILE: styles.css
```css
* { box-sizing: border-box; }
body { margin: 0; height: 100vh; display: flex; flex-direction: column; overflow: hidden; position: relative; background: #f6f6f6; color: #2c2c2c; font: 10px/16px "Noto Sans", "Open Sans", sans-serif; }
button { padding: 0; border: 0; background: transparent; color: inherit; font: inherit; display: flex; align-items: center; justify-content: center; }
h1, p, ul { margin: 0; padding: 0; }
svg { display: block; flex: none; }
.defs { position: absolute; width: 0; height: 0; }

.tri-down, .tri-up, .tri-right { display: block; flex: none; width: 0; height: 0; }
.tri-down { border: 2px solid transparent; border-top: 3px solid #555; border-bottom: 0; }
.tri-up { border: 2px solid transparent; border-bottom: 3px solid #555; border-top: 0; }
.tri-right { border: 2px solid transparent; border-left: 3px solid #444; border-right: 0; }
.drop::after { content: ""; border: 2px solid transparent; border-top: 3px solid #555; border-bottom: 0; }

.titlebar { flex: none; height: 27px; display: flex; align-items: center; border-top: 1px solid #c8c8c8; border-bottom: 1px solid #bcbcbc; background: #f9f9f9; }
.brand { width: 110px; padding-left: 2px; display: flex; align-items: center; gap: 2px; color: #b8152e; font-size: 9px; font-style: italic; white-space: nowrap; }
.brand-more { width: 15px; height: 25px; border-right: 1px solid #ccc; }
.quick { display: flex; align-items: center; padding-left: 13px; }
.quick button { width: 20px; height: 21px; }
.quick svg { width: 14px; height: 14px; }
.quick .drop { width: 12px; }
.quick .pressed { width: 20px; background: #b2b2b2; border: 1px solid #999; }
.quick .boxed { width: 9px; border: 1px solid #ccc; border-left: 0; }
.quick .status-light { margin-left: 2px; }
.quick .status-light ~ button:not(.drop) { margin-left: 2px; }
.titlebar h1 { flex: 1; font-size: 10px; font-weight: 400; text-align: center; }
.search { width: 168px; height: 19px; padding: 0 4px; display: flex; align-items: center; gap: 5px; border: 1px solid #c4c4c4; background: #fff; }
.search input { flex: 1; min-width: 0; padding: 0; border: 0; outline: 0; background: transparent; font: 9px "Noto Sans", sans-serif; }
.search input::placeholder { color: #666; opacity: 1; }
.window-tools { display: flex; padding: 0 4px 0 3px; }
.window-tools button { width: 27px; height: 20px; }
.window-tools svg { width: 13px; height: 13px; }
.window-tools .help { width: 13px; height: 13px; margin: 3px 7px; border: 1px solid #333; border-radius: 50%; font-weight: 600; line-height: 11px; }

.ribbon { flex: none; display: grid; grid-template-columns: 281px 50px 53px 61px 49px 47px 47px 40px 45px 46px 49px 67px 46px 46px 1fr; padding: 3px 0 1px; background: #f9f9f9; border-bottom: 1px solid #ccc; height: 58px; }
.ribbon button { flex-direction: column; justify-content: flex-start; font-size: 9px; line-height: 13px; text-align: center; }
.ribbon svg { width: 13px; height: 13px; margin-bottom: 1px; }
.ribbon .end { border-right: 1px solid #ddd; }
.ribbon .tri-down { margin-top: 5px; }
.ribbon .faded { width: 56px; opacity: .4; }
.ribbon .collapse { align-items: flex-end; justify-content: flex-end; padding: 0 3px 0 0; }

.workspace { flex: 1; min-height: 0; display: flex; flex-direction: column; background: radial-gradient(circle at 50% 51%, #fff 0, #fbfbfb 60px, #f2f2f2 150px, #e9e9e9 260px, #dedede 380px, #d4d4d4 520px); border-right: 1px solid #bbb; }
.command-row { flex: none; height: 19px; display: flex; align-items: center; }
.command-tabs { display: grid; grid-template-columns: 256px 104px 104px 86px; height: 18px; }
.command-tabs button { border: 1px solid #aaa; border-left: 0; border-top-color: #c4c4c4; background: #d0d0d0; padding-right: 1px; }
.command-tabs button:first-child { justify-content: flex-start; padding-left: 7px; }
.hud { display: flex; align-items: center; margin-left: 89px; }
.hud button { width: 17px; height: 18px; }
.hud svg { width: 13px; height: 13px; }
.hud .drop { width: 11px; opacity: .6; }
.hud .pressed { background: #999; border: 1px solid #666; }
.document-tools { display: flex; margin-left: auto; padding-right: 3px; color: #8c8c8c; }
.document-tools button { width: 18px; }
.document-tools svg { width: 12px; height: 12px; }
.work-row { flex: 1; min-height: 0; display: flex; }
.rail { width: 22px; height: 100%; padding: 8px 4px; background: #f6f6f6; display: flex; flex-direction: column; gap: 6px; border-top: 1px dotted #888; }
.rail svg + svg { width: 22px; height: 22px; margin-left: -4px; padding: 0 4px 6px; border-bottom: 1px solid #bbb; }
.feature-panel { width: 181px; position: relative; background: #f9f9f9; border-left: 1px solid #c2c2c2; border-right: 1px solid #c6c6c6; padding-top: 16px; }
.panel-tabs { display: flex; height: 21px; border-top: 1px solid #ccc; padding-top: 3px; }
.panel-tabs button { width: 27px; height: 17px; border: 1px solid #aaa; border-left: 0; background: #d5d5d5; }
.panel-tabs svg { width: 13px; height: 13px; }
.panel-tabs .active { border-color: transparent #aaa transparent transparent; background: #f9f9f9; }
.panel-tabs .next { flex: 1; border: 0; background: transparent; }
.panel-tabs .dots { font-size: 8px; }
.filter { height: 21px; display: flex; align-items: center; padding-left: 3px; margin-right: 2px; border-right: 1px solid #ccc; border-bottom: 1px solid #c6c6c6; }
.filter svg { width: 13px; height: 13px; }
.tree { list-style: none; overflow: hidden; border-bottom: 3px solid #3989b8; font-family: Roboto, "Noto Sans", sans-serif; }
.tree li { height: 16px; padding-left: 16px; display: flex; align-items: center; gap: 3px; white-space: nowrap; }
.tree svg { width: 13px; height: 13px; }
.tree .root { padding-left: 1px; }
.tree .mate { padding-left: 31px; gap: 2px; }
.tree li > i { margin: 0 5px 0 -11px; }
.tree li > .tri-down { margin-right: 4px; }
.scrollbar { padding: 10px 13px; }
.scrollbar i { display: block; width: 62px; height: 2px; background: #888; }
.splitter { position: absolute; top: 247px; right: -9px; width: 9px; height: 33px; border: 1px solid #aaa; border-left: 0; background: #f7f7f7; }
.splitter::after { content: ""; width: 4px; height: 4px; border: 1px solid #999; border-radius: 50%; }
.canvas { flex: 1; position: relative; overflow: hidden; }
.model { position: absolute; left: calc(50% - 51px); top: 186px; width: 220px; height: 200px; }
.pointer { position: absolute; left: calc(50% + 140px); top: 341px; width: 11px; height: 14px; }
.triad { position: absolute; left: 28px; bottom: 37px; width: 40px; height: 42px; }
.triad text { font-size: 7px; font-weight: 600; }
.task-pane { position: absolute; right: 0; top: 20px; width: 21px; border: 1px solid #999; border-right: 0; }
.task-pane button { width: 100%; height: 20px; border-bottom: 1px solid #999; }
.task-pane button:last-child { height: 19px; border-bottom: 0; }
.task-pane .active { background: #f9f9f9; }
.task-pane svg { width: 13px; height: 13px; }

.study-tabs { flex: none; height: 16px; display: flex; padding-left: 22px; border-top: 1px solid #aaa; border-bottom: 1px solid #ccc; background: #f5f5f5; }
.study-tabs button { padding: 0 15px 0 8px; border-right: 1px solid #999; background: #d5d5d5; }
.study-tabs .active { width: 52px; padding: 0; border-left: 1px solid #999; background: #f9f9f9; font-weight: 700; }
.statusbar { flex: none; height: 16px; display: grid; grid-template-columns: 1fr 77px 143px 105px 125px 68px 46px 18px 35px; align-items: center; background: #f8f8f8; white-space: nowrap; font-family: Roboto, "Noto Sans", sans-serif; }
.edition { padding-left: 1px; }
.statusbar svg { width: 11px; height: 11px; }
.performance { display: flex; align-items: center; gap: 3px; padding-left: 4px; border-left: 1px solid #ccc; }
.indicators { display: flex; gap: 6px; padding-left: 4px; }

.taskbar { flex: none; height: 38px; display: flex; justify-content: space-between; background: linear-gradient(90deg, #1b2527 0, #1c262e 26%, #1c1940 36%, #281452 41%, #3a1249 49%, #39104a 60%, #300c3b 78%, #341043 100%); color: #fff; }
.weather { position: relative; width: 24px; margin-left: 16px; }
.weather svg { width: 22px; height: 18px; margin-top: 3px; }
.weather b { position: absolute; top: 4px; right: -1px; width: 13px; height: 13px; border-radius: 50%; background: #f28c9d; color: #421d26; font-size: 9px; font-weight: 400; line-height: 13px; text-align: center; }
.apps { width: 808px; margin-left: 123px; display: grid; grid-template-columns: repeat(22, 1fr); }
.apps button { position: relative; padding-bottom: 1px; }
.apps svg { width: 20px; height: 20px; overflow: visible; }
.apps .running::after { content: ""; position: absolute; bottom: 4px; width: 6px; height: 2px; border-radius: 1px; background: #aaa0b5; }
.apps .selected { background: #44204f; border-radius: 3px; margin: 2px; }
.apps .selected::after { width: 13px; bottom: 2px; background: #d79bea; }
.badge-text { fill: #fff; font-size: 10px; font-weight: 700; }
.tiny { fill: #fff; font-size: 5px; font-weight: 700; }
.tray { flex: 1; display: flex; align-items: center; justify-content: flex-end; padding-right: 16px; }
.tray button { width: 20px; height: 36px; }
.tray button:nth-child(-n+3) { width: 27px; }
.tray svg { width: 14px; height: 13px; }
.tray .language { width: 38px; }
.tray .battery { width: 24px; }
.tray .battery svg { width: 18px; }
.tray time { width: 62px; line-height: 13px; text-align: right; }

.stream-clock { position: absolute; left: 29px; top: 31px; width: 265px; height: 87px; background: #050505; color: #fff; text-align: center; }
.digits { display: flex; justify-content: center; align-items: baseline; height: 59px; padding: 12px 8px 0 0; font: 700 44px/48px "DejaVu Sans", sans-serif; text-shadow: 0 0 3px #3bbce0, 0 0 8px #087894; }
.digits em { margin: 0 4px; color: #ccc; font-style: normal; font-size: 34px; text-shadow: none; }
.digits small { font-size: 34px; }
.slashed { position: relative; }
.slashed::after { content: ""; position: absolute; left: 6px; top: 50%; width: 19px; height: 4px; background: #fff; transform: rotate(-45deg); }
.stream-clock p { color: #ccc; font: 300 13px/16px Inter, sans-serif; }
```
